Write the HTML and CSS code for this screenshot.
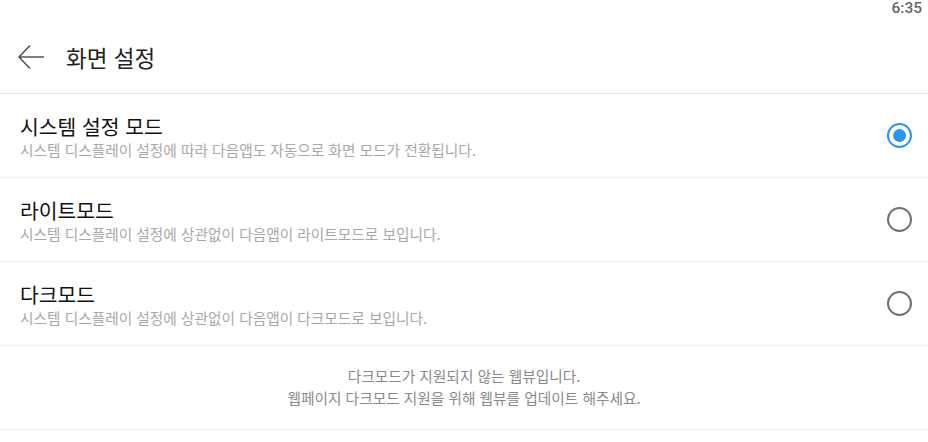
FILE: index.html
```html
<!DOCTYPE html>
<html lang="ko">
<head>
    <meta charset="UTF-8">
    <title>화면 설정</title>
    <link rel="stylesheet" href="styles.css">
</head>
<body>
    <!-- Status bar -->
    <div class="status-bar">6:35</div>

    <!-- Header -->
    <div class="header">
        <svg class="back" width="28" height="26" viewBox="0 0 28 26">
            <path d="M27 13H2M13 1.5L2 13l11 11.5" fill="none" stroke="#555" stroke-width="1.6"/>
        </svg>
        <h1>화면 설정</h1>
    </div>

    <!-- Mode options -->
    <div class="option">
        <div class="option-text">
            <div class="option-title">시스템 설정 모드</div>
            <div class="option-desc">시스템 디스플레이 설정에 따라 다음앱도 자동으로 화면 모드가 전환됩니다.</div>
        </div>
        <span class="radio checked"></span>
    </div>
    <div class="option">
        <div class="option-text">
            <div class="option-title">라이트모드</div>
            <div class="option-desc">시스템 디스플레이 설정에 상관없이 다음앱이 라이트모드로 보입니다.</div>
        </div>
        <span class="radio"></span>
    </div>
    <div class="option">
        <div class="option-text">
            <div class="option-title">다크모드</div>
            <div class="option-desc">시스템 디스플레이 설정에 상관없이 다음앱이 다크모드로 보입니다.</div>
        </div>
        <span class="radio"></span>
    </div>

    <!-- Notice -->
    <div class="notice">
        <p>다크모드가 지원되지 않는 웹뷰입니다.</p>
        <p>웹페이지 다크모드 지원을 위해 웹뷰를 업데이트 해주세요.</p>
    </div>
</body>
</html>
```

FILE: styles.css
```css
/* Page */
body {
    margin: 0;
    background: #fff;
    font-family: Roboto, "Noto Sans CJK KR", sans-serif;
    color: #111;
}

/* Status bar */
.status-bar {
    height: 40px;
    padding-right: 6px;
    text-align: right;
    font-size: 15.5px;
    font-weight: 500;
    line-height: 17px;
    color: #666;
}

/* Header */
.header {
    height: 54px;
    display: flex;
    align-items: flex-start;
    padding-left: 17px;
    border-bottom: 1px solid #e6e6e6;
    box-sizing: border-box;
}

.back {
    margin-top: 4px;
}

.header h1 {
    margin: 0 0 0 21px;
    font-size: 22.5px;
    line-height: 34px;
    font-weight: 400;
    color: #222;
    font-family: "Noto Sans CJK KR", sans-serif;
}

/* Options */
.option {
    height: 83px;
    display: flex;
    align-items: center;
    padding: 0 16px 0 20px;
    border-bottom: 1px solid #ececec;
}

.option-text {
    flex: 1;
    font-family: "Noto Sans CJK KR", sans-serif;
}

.option-title {
    font-size: 20.4px;
    line-height: 27px;
    color: #111;
}

.option-desc {
    font-size: 14.7px;
    line-height: 19px;
    color: #a8a8a8;
}

/* Radio buttons */
.radio {
    width: 21px;
    height: 21px;
    border: 2px solid #707070;
    border-radius: 50%;
    display: flex;
    align-items: center;
    justify-content: center;
}

.radio.checked {
    border-color: #2b95f5;
}

.radio.checked::after {
    content: "";
    width: 13px;
    height: 13px;
    border-radius: 50%;
    background: #2b95f5;
}

/* Notice */
.notice {
    height: 84px;
    display: flex;
    flex-direction: column;
    justify-content: center;
    text-align: center;
    border-bottom: 1px solid #ececec;
    font-family: "Noto Sans CJK KR", sans-serif;
    font-size: 14.7px;
    line-height: 22px;
    color: #8a8a8a;
    padding-bottom: 2px;
    box-sizing: border-box;
}

.notice p {
    margin: 0;
}
```
